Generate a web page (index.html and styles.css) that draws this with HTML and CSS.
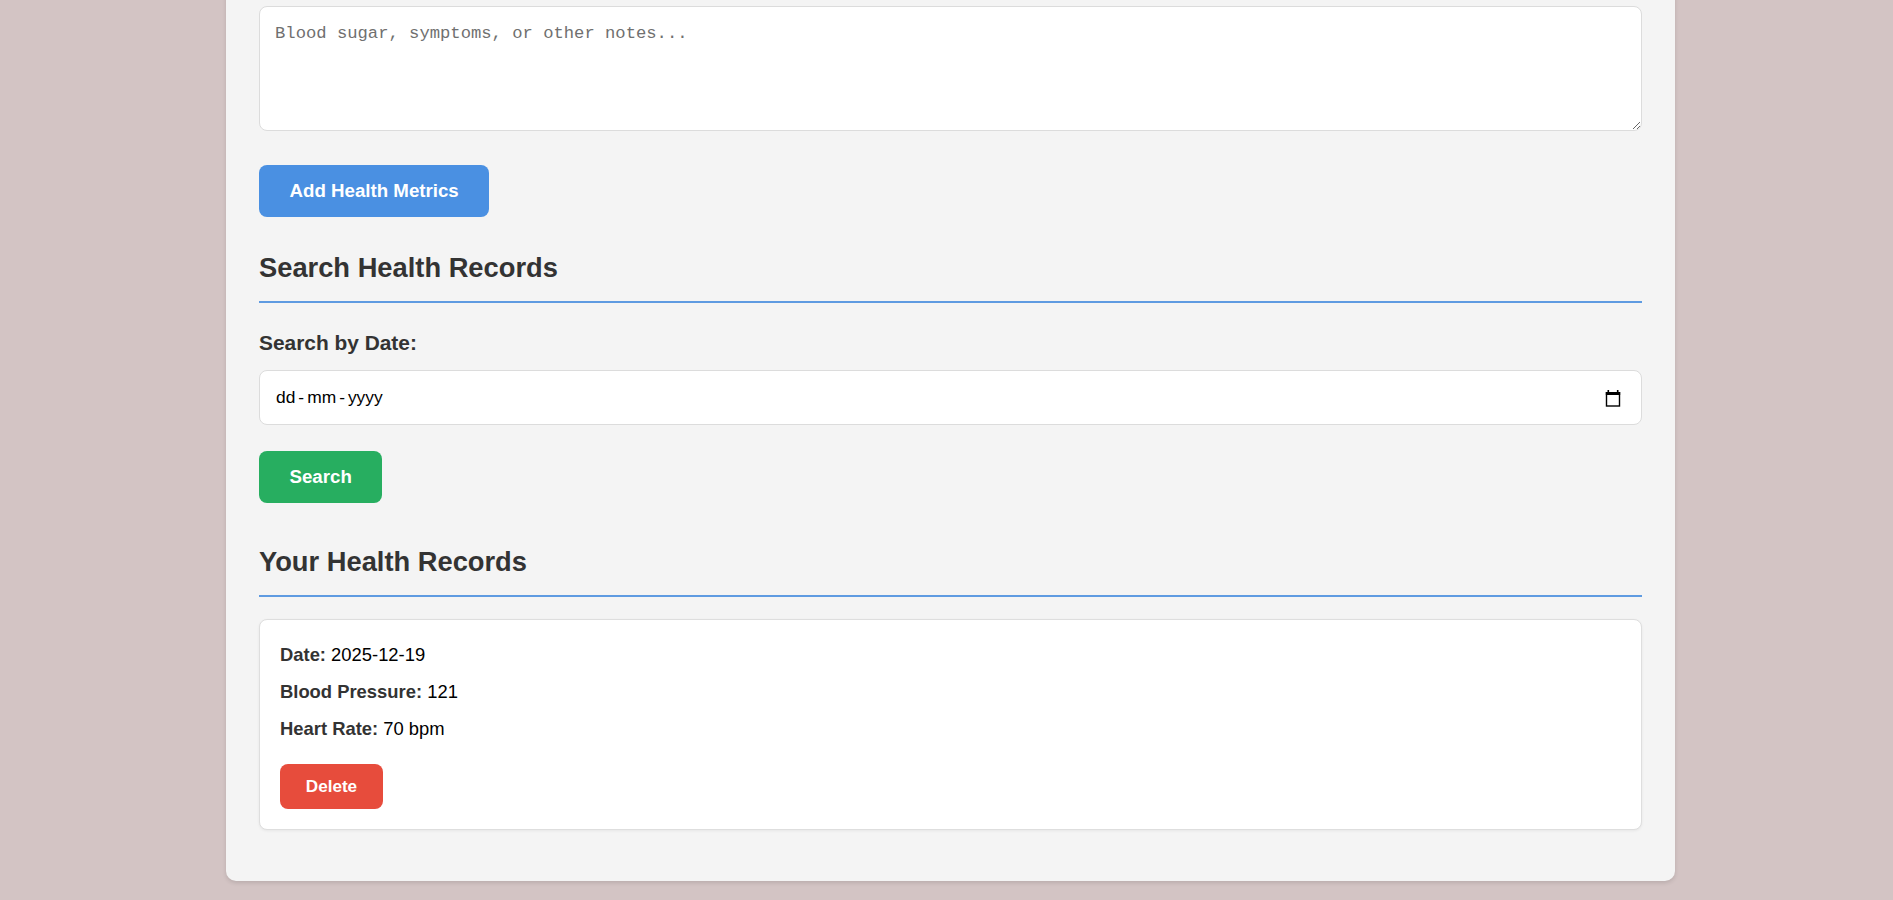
FILE: index.html
```html
<!DOCTYPE html>
<html lang="en">
<head>
<meta charset="utf-8">
<title>Health Records</title>
<link rel="stylesheet" href="styles.css">
</head>
<body>
<div class="container">
  <textarea class="notes" placeholder="Blood sugar, symptoms, or other notes..."></textarea>
  <button class="btn btn-blue btn-add">Add Health Metrics</button>

  <h2 class="section-title title-search">Search Health Records</h2>
  <label class="field-label" for="search-date">Search by Date:</label>
  <div class="date-field" id="search-date">
    <span class="date-text"><span>dd</span><span class="sep">-</span><span>mm</span><span class="sep">-</span><span>yyyy</span></span>
    <svg class="cal-icon" width="16" height="18" viewBox="0 0 16 18" aria-hidden="true">
      <rect x="2.5" y="1" width="1.6" height="3" fill="#000"/>
      <rect x="11.9" y="1" width="1.6" height="3" fill="#000"/>
      <rect x="0.8" y="3" width="14.4" height="3" fill="#000"/>
      <rect x="1.5" y="3.7" width="13" height="13.3" fill="none" stroke="#000" stroke-width="1.4"/>
    </svg>
  </div>
  <button class="btn btn-green btn-search">Search</button>

  <h2 class="section-title title-records">Your Health Records</h2>
  <div class="record-card">
    <p class="record-line"><strong>Date:</strong> 2025-12-19</p>
    <p class="record-line"><strong>Blood Pressure:</strong> 121</p>
    <p class="record-line"><strong>Heart Rate:</strong> 70 bpm</p>
    <button class="btn-delete">Delete</button>
  </div>
</div>
</body>
</html>
```

FILE: styles.css
```css
html, body {
  margin: 0;
  padding: 0;
}

body {
  background: #d3c4c4;
  font-family: "Liberation Sans", Arial, sans-serif;
  color: #333;
  padding-left: 8px;
  min-height: 900px;
  box-sizing: border-box;
}

.container {
  width: 1449px;
  box-sizing: border-box;
  margin: -30px auto 0;
  padding: 36px 33px 51px;
  background: #f4f4f4;
  border-radius: 10px;
  box-shadow: 0 2px 4px rgba(0, 0, 0, 0.12);
  display: flex;
  flex-direction: column;
  align-items: flex-start;
}

.notes {
  align-self: stretch;
  box-sizing: border-box;
  height: 125px;
  margin: 0;
  padding: 17px 15px;
  border: 1px solid #dcdcdc;
  border-radius: 8px;
  background: #fff;
  font-family: "Liberation Mono", "DejaVu Sans Mono", monospace;
  font-size: 17.2px;
  color: #222;
  resize: vertical;
}

.notes::placeholder {
  color: #707070;
}

.btn {
  border: none;
  border-radius: 8px;
  color: #fff;
  font-family: "Liberation Sans", Arial, sans-serif;
  font-weight: bold;
  font-size: 18.7px;
  line-height: 21.5px;
  padding: 15.25px 30.5px;
  cursor: pointer;
}

.btn-blue {
  background: #4a90e2;
}

.btn-green {
  background: #27ae60;
}

.btn-add {
  margin-top: 34px;
}

.btn-search {
  margin-top: 25.3px;
}

.section-title {
  align-self: stretch;
  margin: 0;
  font-size: 27.3px;
  line-height: 31.4px;
  font-weight: bold;
  color: #333;
  padding-bottom: 17px;
  border-bottom: 2px solid #5f9be1;
}

.title-search {
  margin-top: 35.2px;
}

.title-records {
  margin-top: 43.5px;
}

.field-label {
  display: block;
  margin-top: 28px;
  font-size: 20.9px;
  line-height: 24px;
  font-weight: bold;
  color: #333;
}

.date-field {
  align-self: stretch;
  box-sizing: border-box;
  height: 55.4px;
  margin-top: 15.4px;
  padding: 0 20px 0 16px;
  border: 1px solid #dcdcdc;
  border-radius: 8px;
  background: #fff;
  display: flex;
  align-items: center;
  justify-content: space-between;
}

.date-text {
  font-family: "Liberation Sans", Arial, sans-serif;
  font-size: 17.4px;
  color: #000;
  display: flex;
  align-items: baseline;
}

.date-text .sep {
  margin: 0 3px;
}

.cal-icon {
  display: block;
}

.record-card {
  align-self: stretch;
  margin-top: 22px;
  padding: 20px;
  background: #fff;
  border: 1px solid #dedede;
  border-radius: 8px;
  box-shadow: 0 1px 3px rgba(0, 0, 0, 0.06);
  display: flex;
  flex-direction: column;
  align-items: flex-start;
  gap: 8px;
}

.record-line {
  margin: 0;
  font-size: 18.4px;
  line-height: 29.44px;
  color: #000;
}

.record-line strong {
  color: #333;
}

.btn-delete {
  margin-top: 12px;
  border: none;
  border-radius: 8px;
  background: #e74c3c;
  color: #fff;
  font-family: "Liberation Sans", Arial, sans-serif;
  font-weight: bold;
  font-size: 17.1px;
  line-height: 19.6px;
  padding: 12.7px 25.8px;
  cursor: pointer;
}
```
